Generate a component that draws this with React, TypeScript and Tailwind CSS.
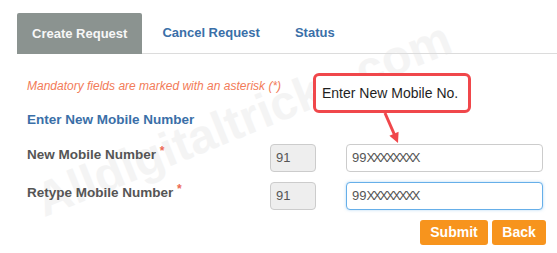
import React from 'react';

const tabs = ['Create Request', 'Cancel Request', 'Status'];

const PhoneRow = ({ label, focused }: { label: string; focused?: boolean }) => (
    <div className="flex items-center h-[28px]">
        <div className="w-[243px] shrink-0 pb-[5px] text-[13.5px] font-bold text-[#555]">
            {label} <span className="text-[12px] leading-none text-[#ec6a55] align-top">*</span>
        </div>
        <div className="w-[46px] h-[28px] shrink-0 flex items-center pl-[5px] rounded-[4px] border border-[#ccc] bg-[#eee] text-[13px] text-[#555]">
            91
        </div>
        <div
            className={
                focused
                    ? 'ml-[30px] w-[197px] h-[28px] shrink-0 flex items-center pl-[5px] rounded-[4px] border border-[#66afe9] bg-white text-[13px] text-[#555] shadow-[0_0_3px_rgba(102,175,233,0.5)]'
                    : 'ml-[30px] w-[197px] h-[28px] shrink-0 flex items-center pl-[5px] rounded-[4px] border border-[#ccc] bg-white text-[13px] text-[#555]'
            }
        >
            99<span className="tracking-[-2.2px]">XXXXXXXX</span>
        </div>
    </div>
);

export default function App() {
    return (
        <div className="relative w-[557px] h-[253px] overflow-hidden bg-white font-['Liberation_Sans',Arial,sans-serif]">
            {/* watermark */}
            <div className="absolute left-[22px] top-[96px] w-[440px] h-[47px] leading-[47px] text-center text-[48px] font-bold text-[#f4f4f4] -rotate-[22deg] select-none pointer-events-none whitespace-nowrap">
                Alldigitaltricks.com
            </div>

            <div className="relative">
                <div className="pt-[13px] pl-[17px]">
                    <div className="flex items-end border-b border-[#dcdcdc]">
                        {tabs.map((t, i) => (
                            <div
                                key={t}
                                className={
                                    i === 0
                                        ? 'h-[41px] -mb-px px-[15px] flex items-center rounded-t-[2px] bg-[#8b9390] text-[13px] font-bold text-[#f7f7f7]'
                                        : 'h-[40px] ml-[5px] px-[15px] flex items-center text-[13px] font-bold text-[#3a6fa8]'
                                }
                            >
                                {t}
                            </div>
                        ))}
                    </div>
                </div>

                <div className="px-[27px]">
                    <p className="mt-[25px] text-[12px] leading-[14px] italic text-[#f27b58]">
                        Mandatory fields are marked with an asterisk (*)
                    </p>
                    <h3 className="mt-[19px] text-[13.5px] leading-[16px] font-bold text-[#3a6fa8]">Enter New Mobile Number</h3>

                    <div className="mt-[16px] flex flex-col gap-[10px]">
                        <PhoneRow label="New Mobile Number" />
                        <PhoneRow label="Retype Mobile Number" focused />
                    </div>
                </div>

                <div className="mt-[10px] pr-[11px] flex justify-end gap-[4px]">
                    <button className="w-[68px] h-[25px] rounded-[3px] bg-[#f7941d] text-[14px] font-bold text-white">Submit</button>
                    <button className="w-[54px] h-[25px] rounded-[3px] bg-[#f7941d] text-[14px] font-bold text-white">Back</button>
                </div>
            </div>

            {/* callout */}
            <div className="absolute left-[313px] top-[73px] w-[158px] h-[40px] flex items-center pl-[6px] rounded-[6px] border-[3px] border-[#f0474b] bg-white text-[14px] text-[#1f1f1f] whitespace-nowrap">
                Enter New Mobile No.
            </div>
            <svg className="absolute left-[370px] top-[110px]" width="40" height="40" viewBox="0 0 40 40">
                <line x1="15" y1="3" x2="25" y2="26" stroke="#f0474b" strokeWidth="3" />
                <polygon points="28,33 28.6,21.8 19.4,25.8" fill="#f0474b" />
            </svg>
        </div>
    );
}
